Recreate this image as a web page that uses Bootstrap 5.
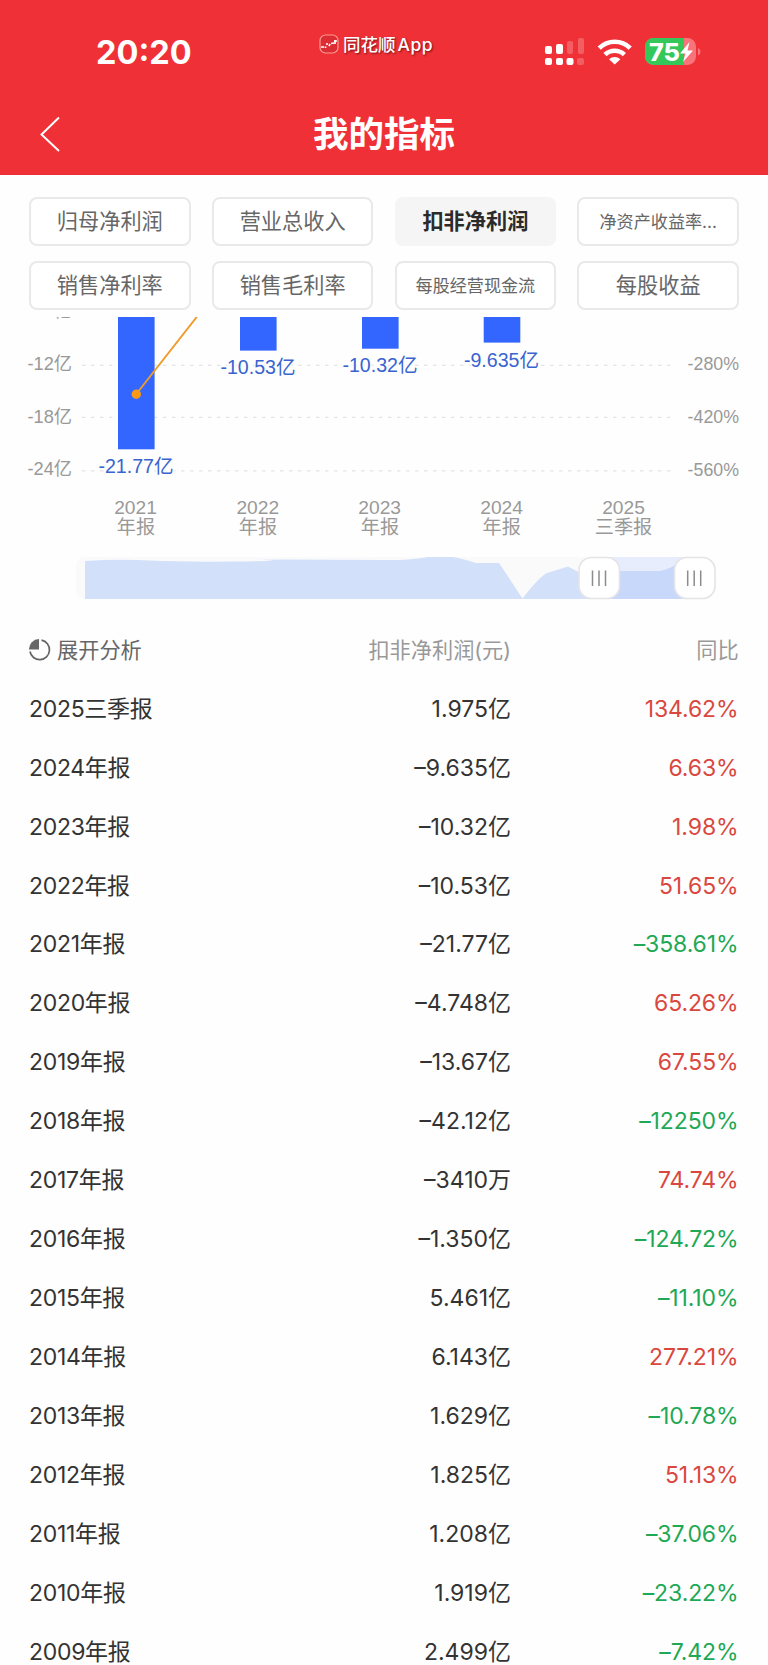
<!DOCTYPE html>
<html lang="zh-CN">
<head>
<meta charset="utf-8">
<meta name="viewport" content="width=device-width, initial-scale=1">
<title>我的指标</title>
<link rel="stylesheet" href="https://cdn.jsdelivr.net/npm/bootstrap@5.3.0/dist/css/bootstrap.min.css">
<style>
body{background:#fefefe;font-family:Inter,"Noto Sans CJK SC",sans-serif;color:#333;height:1665px;overflow:hidden}
.top-bar{background:#f03037;height:174.500px;color:#fff}
.status-row{height:94px}
.clock{font-size:32.500px;font-weight:700;line-height:32px;width:319px;padding-left:96px;padding-top:37px}
.app-tag{width:225px;padding-top:33px;font-size:17.5px;line-height:24px;font-weight:500;text-shadow:1px 1px 2px rgba(70,0,0,.7)}
.app-tag svg{margin-top:-2px}
.latin{margin-left:2px;letter-spacing:.5px}
.page-title{font-size:35.5px;font-weight:700;line-height:82px}
.title-row{height:80px;padding:0 29px}
.side{width:60px}
.tabs-grid{padding:22px 29px 7px;height:142.500px}
.tabs-grid .row{--bs-gutter-x:21.2px;--bs-gutter-y:15px}
.tab-btn{height:49.3px;border:2px solid #ebe8e9;border-radius:8px;color:#666;font-size:21.2px;line-height:1;padding:1px 0 0;background:#fff}
.tab-btn.compact{font-size:17.1px}
.tab-btn.active{background:#f5f5f5!important;border-color:#f5f5f5!important;color:#2b2b2b!important;font-weight:700}
.chart{height:304px}
.chart text{font-family:"Liberation Sans","Noto Sans CJK SC",sans-serif}
.line{height:58.95px;padding:1px 29px 0;font-size:23px;letter-spacing:0}
.line.head{height:58px;font-size:21.2px;color:#999}
.c1{width:200px;letter-spacing:-.3px}.c2{width:282px}.c3{width:227.5px;letter-spacing:-.1px}
.head .c1{letter-spacing:0}
.up{color:#d9483f}.down{color:#1fa855}
</style>
</head>
<body>
<header class="top-bar">
  <div class="status-row d-flex align-items-start">
    <div class="clock">20:20</div>
    <div class="app-tag d-flex align-items-center">
      <svg width="20" height="20" viewBox="0 0 20 20" class="me-1 flex-shrink-0"><rect x="1" y="1" width="18" height="18" rx="5.500" fill="#dc2c34" stroke="#ff9a90" stroke-width="1.200"/><path d="M2 13h3M6.500 12.500v1.500M7 10h2M10 12l1-2M12 9.500l3-.5M16 6v4M15 7h3" fill="none" stroke="#fff" stroke-width="1.700"/></svg>
      <span>同花顺<span class="latin">App</span></span>
    </div>
    <svg width="158" height="32" viewBox="544 36 158 32" style="margin-top:36px">
      <g fill="#fff">
        <rect x="545" y="46" width="7" height="8" rx="2"/><rect x="556" y="44" width="7" height="10" rx="2"/>
        <rect x="545" y="58" width="7" height="7" rx="2"/><rect x="556" y="58" width="7" height="7" rx="2"/><rect x="566.500" y="58" width="7" height="7" rx="2"/>
        <g opacity=".22"><rect x="567" y="41" width="6" height="13" rx="2"/><rect x="578" y="38" width="6" height="16" rx="2"/><rect x="577" y="58" width="7" height="7" rx="2"/></g>
      </g>
      <g fill="none" stroke="#fff" stroke-width="4.600"><path d="M599.200 48.200a22 22 0 0 1 31 0"/><path d="M605 54.600a14 14 0 0 1 19.400 0"/></g>
      <path d="M609 59.300a8.500 8.500 0 0 1 11.400 0L614.700 64.500z" fill="#fff"/>
      <clipPath id="cell"><rect x="645" y="38" width="51" height="27" rx="8.500"/></clipPath>
      <g clip-path="url(#cell)"><rect x="645" y="38" width="51" height="27" fill="#f7757a"/><rect x="645" y="38" width="39" height="27" fill="#34c759"/></g>
      <path d="M698 48v7.500q2.500-1 2.500-3.700t-2.500-3.800z" fill="#f7757a"/>
      <text x="649" y="60.500" font-size="24" font-weight="800" fill="#fff" textLength="31" lengthAdjust="spacingAndGlyphs">75</text>
      <path d="M689.500 42l-9.500 11.500h5.500l-2.500 8.500 10-11.500h-5.500z" fill="#fff"/>
    </svg>
  </div>
  <div class="title-row d-flex justify-content-between">
    <div class="side"><svg width="40" height="40" viewBox="29 114 40 40" style="margin-top:20px"><path d="M59 117.500L41.500 134.500 59 151" fill="none" stroke="#fff" stroke-width="2"/></svg></div>
    <h1 class="page-title m-0">我的指标</h1>
    <div class="side"></div>
  </div>
</header>
<nav class="tabs-grid">
  <div class="row">
    <div class="col-3"><button class="btn tab-btn w-100">归母净利润</button></div>
    <div class="col-3"><button class="btn tab-btn w-100">营业总收入</button></div>
    <div class="col-3"><button class="btn tab-btn active w-100">扣非净利润</button></div>
    <div class="col-3"><button class="btn tab-btn compact w-100">净资产收益率...</button></div>
    <div class="col-3"><button class="btn tab-btn w-100">销售净利率</button></div>
    <div class="col-3"><button class="btn tab-btn w-100">销售毛利率</button></div>
    <div class="col-3"><button class="btn tab-btn compact w-100">每股经营现金流</button></div>
    <div class="col-3"><button class="btn tab-btn w-100">每股收益</button></div>
  </div>
</nav>
<svg class="chart d-block" width="768" height="304" viewBox="0 317 768 304">
  <g stroke="#e4e4e4" stroke-width="1.300" stroke-dasharray="3.500 5.500"><path d="M82 365.300H674M82 417.300H674M82 470.800H674"/></g>
  <g fill="#3366ff"><rect x="118" y="310" width="36.600" height="139.300"/><rect x="240" y="310" width="36.600" height="40.600"/><rect x="362" y="310" width="36.600" height="38.700"/><rect x="483.700" y="310" width="36.600" height="32.600"/></g>
  <path d="M136.300 394L197.500 316" stroke="#ee9b2b" stroke-width="1.900"/><circle cx="136.300" cy="394.200" r="4.700" fill="#fa9a14"/>
  <g fill="#999" font-size="18.200"><g text-anchor="end"><text x="72" y="316.800">-6亿</text><text x="72" y="369.800">-12亿</text><text x="72" y="422.900">-18亿</text><text x="72" y="475.400">-24亿</text>
  <text x="739" y="370.300" font-size="17.800">-280%</text><text x="739" y="423.200" font-size="17.800">-420%</text><text x="739" y="475.700" font-size="17.800">-560%</text></g></g>
  <g fill="#3964cf" stroke="#fefefe" stroke-width="3" paint-order="stroke" font-size="19.600" text-anchor="middle"><text x="136" y="472.800">-21.77亿</text><text x="258" y="373.500">-10.53亿</text><text x="380" y="372">-10.32亿</text><text x="501.500" y="366.500">-9.635亿</text></g>
  <g fill="#999" font-size="19.200" text-anchor="middle"><text x="135.500" y="514">2021</text><text x="136" y="533.800">年报</text><text x="257.800" y="514">2022</text><text x="258" y="533.800">年报</text><text x="379.700" y="514">2023</text><text x="380" y="533.800">年报</text><text x="501.600" y="514">2024</text><text x="501.800" y="533.800">年报</text><text x="623.500" y="514">2025</text><text x="623.500" y="533.800">三季报</text></g>
  <rect x="76" y="557" width="638" height="42" rx="9" fill="#fafafb"/>
  <path d="M85 599V561Q120 559 150 560.500T235 561.500 265 560 400 560Q417 559 428 557H453Q460 558 476 563H499L522.500 598.500Q540 576 547 573L568 566.500 590 578V599z" fill="#d3e0f9"/>
  <rect x="599" y="557" width="94" height="42" fill="#e7edfd"/><path d="M599 599V571H660Q670 569 680 562H693V599z" fill="#c8d8fb"/>
  <g fill="#fff" stroke="#e4e4e6" stroke-width="1.600"><rect x="579" y="557.500" width="40.500" height="41" rx="12.500"/><rect x="674.500" y="557.500" width="40.500" height="41" rx="12.500"/></g>
  <path d="M592.500 570.500v15.500M599 570.500v15.500M605.500 570.500v15.500M687.700 570.500v15.500M694.200 570.500v15.500M700.700 570.500v15.500" stroke="#8c8c8c" stroke-width="1.500"/>
</svg>
<main>
  <div class="line head d-flex align-items-center"><div class="c1 d-flex align-items-center" style="color:#666"><svg width="22" height="22" viewBox="0 0 22 22" style="margin-right:6px"><path d="M10 0V10.500H0A10.300 10.300 0 0 1 10 0z" fill="#666"/><path d="M12.500 1.200A9.800 9.800 0 1 1 1 12.500" fill="none" stroke="#666" stroke-width="1.700"/></svg>展开分析</div><div class="c2 text-end" style="padding-right:0">扣非净利润(元)</div><div class="c3 text-end">同比</div></div>
  <div class="line d-flex align-items-center"><div class="c1">2025三季报</div><div class="c2 text-end">1.975亿</div><div class="c3 text-end up">134.62%</div></div>
  <div class="line d-flex align-items-center"><div class="c1">2024年报</div><div class="c2 text-end">–9.635亿</div><div class="c3 text-end up">6.63%</div></div>
  <div class="line d-flex align-items-center"><div class="c1">2023年报</div><div class="c2 text-end">–10.32亿</div><div class="c3 text-end up">1.98%</div></div>
  <div class="line d-flex align-items-center"><div class="c1">2022年报</div><div class="c2 text-end">–10.53亿</div><div class="c3 text-end up">51.65%</div></div>
  <div class="line d-flex align-items-center"><div class="c1">2021年报</div><div class="c2 text-end">–21.77亿</div><div class="c3 text-end down">–358.61%</div></div>
  <div class="line d-flex align-items-center"><div class="c1">2020年报</div><div class="c2 text-end">–4.748亿</div><div class="c3 text-end up">65.26%</div></div>
  <div class="line d-flex align-items-center"><div class="c1">2019年报</div><div class="c2 text-end">–13.67亿</div><div class="c3 text-end up">67.55%</div></div>
  <div class="line d-flex align-items-center"><div class="c1">2018年报</div><div class="c2 text-end">–42.12亿</div><div class="c3 text-end down">–12250%</div></div>
  <div class="line d-flex align-items-center"><div class="c1">2017年报</div><div class="c2 text-end">–3410万</div><div class="c3 text-end up">74.74%</div></div>
  <div class="line d-flex align-items-center"><div class="c1">2016年报</div><div class="c2 text-end">–1.350亿</div><div class="c3 text-end down">–124.72%</div></div>
  <div class="line d-flex align-items-center"><div class="c1">2015年报</div><div class="c2 text-end">5.461亿</div><div class="c3 text-end down">–11.10%</div></div>
  <div class="line d-flex align-items-center"><div class="c1">2014年报</div><div class="c2 text-end">6.143亿</div><div class="c3 text-end up">277.21%</div></div>
  <div class="line d-flex align-items-center"><div class="c1">2013年报</div><div class="c2 text-end">1.629亿</div><div class="c3 text-end down">–10.78%</div></div>
  <div class="line d-flex align-items-center"><div class="c1">2012年报</div><div class="c2 text-end">1.825亿</div><div class="c3 text-end up">51.13%</div></div>
  <div class="line d-flex align-items-center"><div class="c1">2011年报</div><div class="c2 text-end">1.208亿</div><div class="c3 text-end down">–37.06%</div></div>
  <div class="line d-flex align-items-center"><div class="c1">2010年报</div><div class="c2 text-end">1.919亿</div><div class="c3 text-end down">–23.22%</div></div>
  <div class="line d-flex align-items-center"><div class="c1">2009年报</div><div class="c2 text-end">2.499亿</div><div class="c3 text-end down">–7.42%</div></div>
</main>
<script src="https://cdn.jsdelivr.net/npm/bootstrap@5.3.0/dist/js/bootstrap.bundle.min.js"></script>
</body>
</html>
